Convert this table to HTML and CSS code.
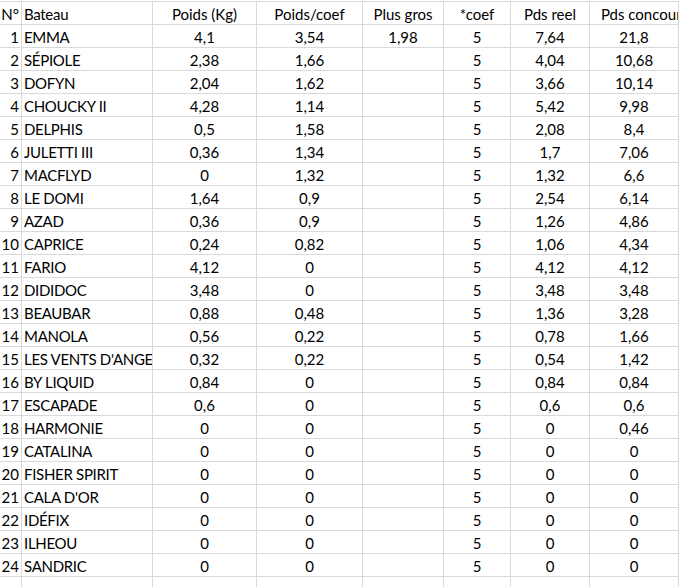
FILE: index.html
```html
<!DOCTYPE html>
<html lang="fr">
<head>
<meta charset="utf-8">
<title>Classement</title>
<link rel="stylesheet" href="styles.css">
</head>
<body>
<div class="sheet">
  <div class="c num">N°</div><div class="c name">Bateau</div><div class="c">Poids (Kg)</div><div class="c">Poids/coef</div><div class="c">Plus gros</div><div class="c">*coef</div><div class="c">Pds reel</div><div class="c clip">Pds concours</div>
  <div class="c num">1</div><div class="c name">EMMA</div><div class="c">4,1</div><div class="c">3,54</div><div class="c">1,98</div><div class="c">5</div><div class="c">7,64</div><div class="c">21,8</div>
  <div class="c num">2</div><div class="c name">SÉPIOLE</div><div class="c">2,38</div><div class="c">1,66</div><div class="c"></div><div class="c">5</div><div class="c">4,04</div><div class="c">10,68</div>
  <div class="c num">3</div><div class="c name">DOFYN</div><div class="c">2,04</div><div class="c">1,62</div><div class="c"></div><div class="c">5</div><div class="c">3,66</div><div class="c">10,14</div>
  <div class="c num">4</div><div class="c name">CHOUCKY II</div><div class="c">4,28</div><div class="c">1,14</div><div class="c"></div><div class="c">5</div><div class="c">5,42</div><div class="c">9,98</div>
  <div class="c num">5</div><div class="c name">DELPHIS</div><div class="c">0,5</div><div class="c">1,58</div><div class="c"></div><div class="c">5</div><div class="c">2,08</div><div class="c">8,4</div>
  <div class="c num">6</div><div class="c name">JULETTI III</div><div class="c">0,36</div><div class="c">1,34</div><div class="c"></div><div class="c">5</div><div class="c">1,7</div><div class="c">7,06</div>
  <div class="c num">7</div><div class="c name">MACFLYD</div><div class="c">0</div><div class="c">1,32</div><div class="c"></div><div class="c">5</div><div class="c">1,32</div><div class="c">6,6</div>
  <div class="c num">8</div><div class="c name">LE DOMI</div><div class="c">1,64</div><div class="c">0,9</div><div class="c"></div><div class="c">5</div><div class="c">2,54</div><div class="c">6,14</div>
  <div class="c num">9</div><div class="c name">AZAD</div><div class="c">0,36</div><div class="c">0,9</div><div class="c"></div><div class="c">5</div><div class="c">1,26</div><div class="c">4,86</div>
  <div class="c num">10</div><div class="c name">CAPRICE</div><div class="c">0,24</div><div class="c">0,82</div><div class="c"></div><div class="c">5</div><div class="c">1,06</div><div class="c">4,34</div>
  <div class="c num">11</div><div class="c name">FARIO</div><div class="c">4,12</div><div class="c">0</div><div class="c"></div><div class="c">5</div><div class="c">4,12</div><div class="c">4,12</div>
  <div class="c num">12</div><div class="c name">DIDIDOC</div><div class="c">3,48</div><div class="c">0</div><div class="c"></div><div class="c">5</div><div class="c">3,48</div><div class="c">3,48</div>
  <div class="c num">13</div><div class="c name">BEAUBAR</div><div class="c">0,88</div><div class="c">0,48</div><div class="c"></div><div class="c">5</div><div class="c">1,36</div><div class="c">3,28</div>
  <div class="c num">14</div><div class="c name">MANOLA</div><div class="c">0,56</div><div class="c">0,22</div><div class="c"></div><div class="c">5</div><div class="c">0,78</div><div class="c">1,66</div>
  <div class="c num">15</div><div class="c name">LES VENTS D'ANGE</div><div class="c">0,32</div><div class="c">0,22</div><div class="c"></div><div class="c">5</div><div class="c">0,54</div><div class="c">1,42</div>
  <div class="c num">16</div><div class="c name">BY LIQUID</div><div class="c">0,84</div><div class="c">0</div><div class="c"></div><div class="c">5</div><div class="c">0,84</div><div class="c">0,84</div>
  <div class="c num">17</div><div class="c name">ESCAPADE</div><div class="c">0,6</div><div class="c">0</div><div class="c"></div><div class="c">5</div><div class="c">0,6</div><div class="c">0,6</div>
  <div class="c num">18</div><div class="c name">HARMONIE</div><div class="c">0</div><div class="c">0</div><div class="c"></div><div class="c">5</div><div class="c">0</div><div class="c">0,46</div>
  <div class="c num">19</div><div class="c name">CATALINA</div><div class="c">0</div><div class="c">0</div><div class="c"></div><div class="c">5</div><div class="c">0</div><div class="c">0</div>
  <div class="c num">20</div><div class="c name">FISHER SPIRIT</div><div class="c">0</div><div class="c">0</div><div class="c"></div><div class="c">5</div><div class="c">0</div><div class="c">0</div>
  <div class="c num">21</div><div class="c name">CALA D'OR</div><div class="c">0</div><div class="c">0</div><div class="c"></div><div class="c">5</div><div class="c">0</div><div class="c">0</div>
  <div class="c num">22</div><div class="c name">IDÉFIX</div><div class="c">0</div><div class="c">0</div><div class="c"></div><div class="c">5</div><div class="c">0</div><div class="c">0</div>
  <div class="c num">23</div><div class="c name">ILHEOU</div><div class="c">0</div><div class="c">0</div><div class="c"></div><div class="c">5</div><div class="c">0</div><div class="c">0</div>
  <div class="c num">24</div><div class="c name">SANDRIC</div><div class="c">0</div><div class="c">0</div><div class="c"></div><div class="c">5</div><div class="c">0</div><div class="c">0</div>
  <div class="c num"></div><div class="c name"></div><div class="c"></div><div class="c"></div><div class="c"></div><div class="c"></div><div class="c"></div><div class="c"></div>
</div>
</body>
</html>
```
FILE: styles.css
```css
html, body {
  margin: 0;
  padding: 0;
  background: #ffffff;
  overflow: hidden;
}
body {
  padding-top: 1px;
}
.sheet {
  display: grid;
  grid-template-columns: 22px 131px 104px 106px 81px 67px 79px 1fr;
  grid-auto-rows: 23px;
  border-top: 1px solid #d9d9d9;
  font-family: Lato, "Liberation Sans", Arial, sans-serif;
  font-size: 15px;
  color: #000000;
}
.c {
  box-sizing: border-box;
  border-right: 1px solid #d9d9d9;
  border-bottom: 1px solid #d9d9d9;
  text-align: center;
  line-height: 22px;
  white-space: nowrap;
  overflow: hidden;
  padding-top: 1px;
}
.num {
  text-align: right;
  padding-right: 2px;
  overflow: visible;
}
.name {
  text-align: left;
  padding-left: 2px;
  letter-spacing: -0.3px;
}
.clip {
  text-align: left;
  padding-left: 11px;
}
```
